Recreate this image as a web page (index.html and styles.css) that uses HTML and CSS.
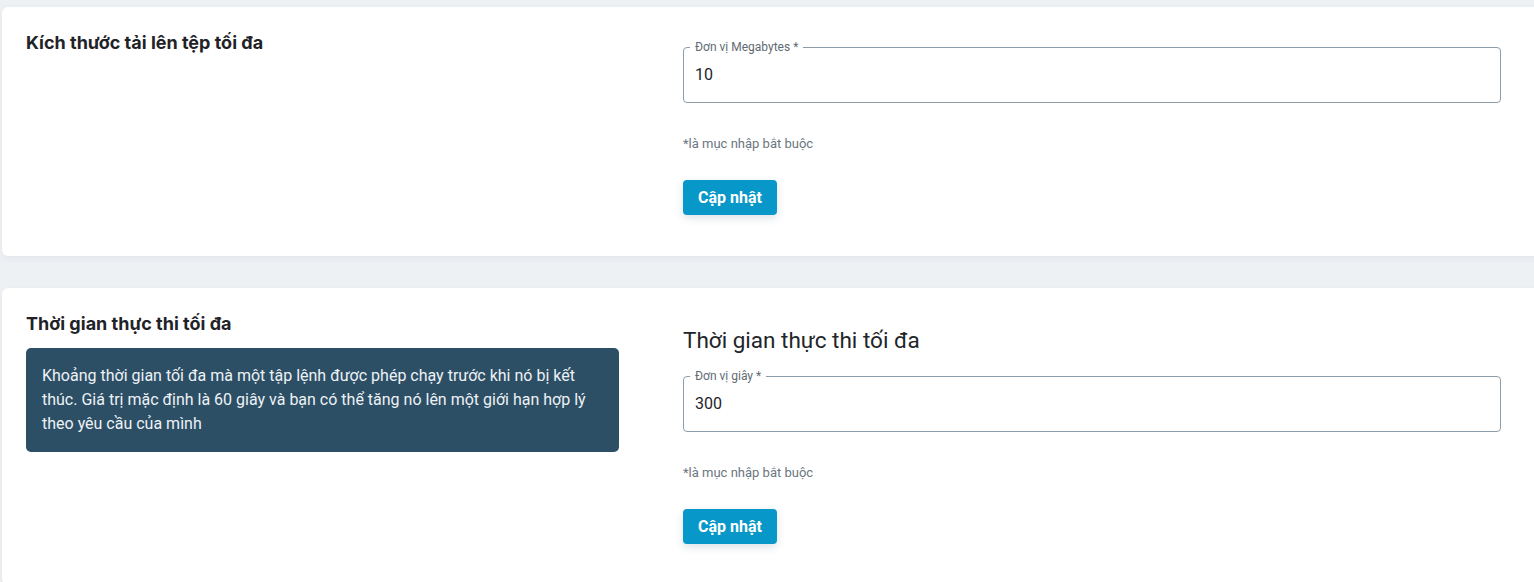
FILE: index.html
```html
<!DOCTYPE html>
<html lang="vi">
<head>
<meta charset="utf-8">
<title>Cài đặt</title>
<link rel="stylesheet" href="styles.css">
</head>
<body>
<div class="page">
  <section class="card">
    <div class="col-left">
      <h3 class="card-title">Kích thước tải lên tệp tối đa</h3>
    </div>
    <div class="col-right">
      <div class="field">
        <span class="field-label">Đơn vị Megabytes *</span>
        <input class="field-input" type="text" value="10">
      </div>
      <p class="helper">*là mục nhập bắt buộc</p>
      <button class="btn" type="button">Cập nhật</button>
    </div>
  </section>

  <section class="card">
    <div class="col-left">
      <h3 class="card-title">Thời gian thực thi tối đa</h3>
      <div class="info-box">Khoảng thời gian tối đa mà một tập lệnh được phép chạy trước khi nó bị kết thúc. Giá trị mặc định là 60 giây và bạn có thể tăng nó lên một giới hạn hợp lý theo yêu cầu của mình</div>
    </div>
    <div class="col-right">
      <h5 class="section-heading">Thời gian thực thi tối đa</h5>
      <div class="field">
        <span class="field-label">Đơn vị giây *</span>
        <input class="field-input" type="text" value="300">
      </div>
      <p class="helper">*là mục nhập bắt buộc</p>
      <button class="btn" type="button">Cập nhật</button>
    </div>
  </section>
</div>
</body>
</html>
```

FILE: styles.css
```css
* { box-sizing: border-box; }

html, body {
  margin: 0;
  padding: 0;
  overflow: hidden;
}

body {
  background: #eef1f4;
  font-family: Roboto, "Noto Sans", Arial, sans-serif;
  color: #212529;
}

.page {
  padding: 7px 0 0 2px;
  display: flex;
  flex-direction: column;
  gap: 32px;
  width: 1560px;
}

.card {
  background: #ffffff;
  border-radius: 6px;
  box-shadow: 0 2px 6px rgba(30, 50, 70, 0.06);
  display: grid;
  grid-template-columns: 593px 818px;
  column-gap: 64px;
  padding: 24px 24px 41px 24px;
}

.col-left, .col-right {
  display: flex;
  flex-direction: column;
  align-items: flex-start;
}

.card-title {
  margin: 0;
  font-family: Inter, Roboto, sans-serif;
  font-size: 18px;
  line-height: 24px;
  font-weight: 700;
  color: #1f2328;
}

.info-box {
  margin-top: 12px;
  width: 100%;
  background: #2c4f66;
  color: #eef2f5;
  border-radius: 5px;
  padding: 16px;
  font-size: 16px;
  line-height: 24px;
}

.section-heading {
  margin: 14px 0 5px 0;
  font-size: 22.5px;
  line-height: 29px;
  font-weight: 400;
  color: #212529;
}

.field {
  position: relative;
  margin-top: 16px;
  width: 100%;
  height: 56px;
  border: 1px solid #8c9ca8;
  border-radius: 4px;
}

.field-label {
  position: absolute;
  top: -8px;
  left: 6px;
  padding: 0 5px;
  background: #ffffff;
  font-size: 12px;
  line-height: 15px;
  color: #5f6b74;
}

.field-input {
  display: block;
  width: 100%;
  height: 100%;
  border: 0;
  outline: none;
  background: transparent;
  padding: 0 11px 2px;
  font-family: inherit;
  font-size: 16px;
  color: #212529;
}

.helper {
  margin: 31px 0 0 0;
  font-size: 13px;
  line-height: 20px;
  color: #6b7680;
}

.btn {
  margin-top: 26px;
  height: 35px;
  padding: 0 15px;
  border: 0;
  border-radius: 4px;
  background: #0797c8;
  color: #ffffff;
  font-family: inherit;
  font-size: 16px;
  font-weight: 700;
  box-shadow: 0 3px 8px rgba(0, 60, 90, 0.15);
}
```
